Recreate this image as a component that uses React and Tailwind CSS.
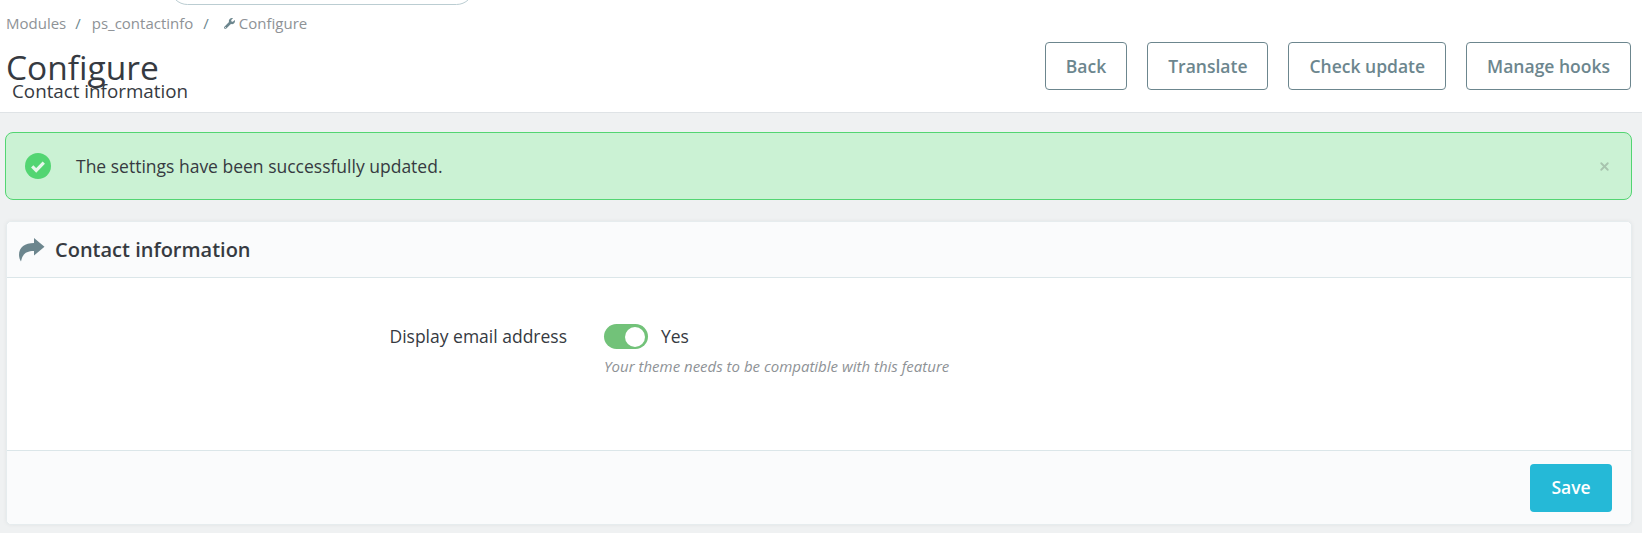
import React from 'react';
import { X } from 'lucide-react';
import { FaWrench } from 'react-icons/fa';

function HeaderButton({ children }) {
  return (
    <button className="h-12 px-[20px] rounded-[4px] border border-[#6c868e] bg-white text-[#6c868e] text-[17.5px] font-semibold">
      {children}
    </button>
  );
}

function SuccessIcon() {
  return (
    <svg viewBox="0 0 26 26" className="w-[26px] h-[26px] shrink-0">
      <circle cx="13" cy="13" r="13" fill="#53d572" />
      <path d="M7.2 13.4l4 4 7.6-7.8" fill="none" stroke="#e6f7ea" strokeWidth="3.2" />
    </svg>
  );
}

function ShareIcon() {
  return (
    <svg viewBox="0 0 26 24" className="w-[26px] h-[24px] shrink-0">
      <path d="M15 0L25.5 8.8L15 17.5V13C7 13 3.5 16 2 23.5C1 22 0 19.5 0 17C0 9 6 5 15 5Z" fill="#6c868e" />
    </svg>
  );
}

export default function App() {
  return (
    <div className="w-[1642px] h-[533px] overflow-hidden bg-[#eff1f2] font-['Open_Sans',sans-serif] text-[#363a41]">
      {/* Header */}
      <div className="relative h-[113px] bg-white border-b border-[#dfe3e6] pl-[6px] pr-[11px]">
        <div className="absolute left-[170px] top-[-30px] w-[304px] h-[35px] rounded-full border border-[#bbcdd2] bg-white"></div>
        <div className="flex items-center h-[17px] translate-y-[15px] text-[15px] text-[#8e9296]">
          <span>Modules</span>
          <span className="ml-[9px] text-[#6c868e]">/</span>
          <span className="ml-[11px]">ps_contactinfo</span>
          <span className="ml-[10px] text-[#6c868e]">/</span>
          <FaWrench className="ml-[15px] w-[11px] h-[11px] text-[#6c868e]" />
          <span className="ml-[4px]">Configure</span>
        </div>
        <div className="flex justify-between items-start mt-[25px]">
          <div>
            <div className="text-[33.5px] leading-[46px] text-[#363a41] mt-[2px]">Configure</div>
            <div className="text-[18.8px] leading-[24px] text-[#363a41] pl-[6px] -mt-[11px]">Contact information</div>
          </div>
          <div className="flex gap-[20px]">
            <HeaderButton>Back</HeaderButton>
            <HeaderButton>Translate</HeaderButton>
            <HeaderButton>Check update</HeaderButton>
            <HeaderButton>Manage hooks</HeaderButton>
          </div>
        </div>
      </div>

      <div className="pl-[5px] pr-[10px] pt-[19px]">
        {/* Alert */}
        <div className="h-[68px] flex items-center rounded-[8px] border border-[#53d572] bg-[#cbf2d4] pl-[19px] pr-[20px]">
          <SuccessIcon />
          <span className="ml-[25px] text-[17.5px]">The settings have been successfully updated.</span>
          <X className="ml-auto w-[13px] h-[13px] text-[#a8c4ae]" strokeWidth={3.5} />
        </div>

        {/* Panel */}
        <div className="mt-[21px] ml-[1px] h-[304px] flex flex-col rounded-[5px] bg-white border border-[#e6ecee] shadow-[0_0_4px_0_rgba(0,0,0,0.06)]">
          <div className="h-[56px] flex items-center bg-[#fafbfc] border-b border-[#dbe6e9] pl-[12px] rounded-t-[5px]">
            <ShareIcon />
            <span className="ml-[10px] text-[20px] font-semibold">Contact information</span>
          </div>
          <div className="flex-1 flex items-start pt-[46px]">
            <div className="w-[560px] text-right text-[17.5px] leading-[24px]">Display email address</div>
            <div className="ml-[37px]">
              <div className="flex items-center h-[25px]">
                <div className="w-[44px] h-[25px] rounded-full bg-[#72c279] flex items-center justify-end pr-[3px]">
                  <div className="w-[20px] h-[20px] rounded-full bg-white"></div>
                </div>
                <span className="ml-[13px] text-[17.5px]">Yes</span>
              </div>
              <div className="mt-[6px] text-[15px] italic text-[#8e9296]">Your theme needs to be compatible with this feature</div>
            </div>
          </div>
          <div className="h-[74px] flex items-center justify-end bg-[#fafbfc] border-t border-[#dbe6e9] pr-[19px] rounded-b-[5px]">
            <button className="w-[82px] h-12 rounded-[4px] bg-[#25b9d7] text-white text-[17.5px] font-semibold">Save</button>
          </div>
        </div>
      </div>
    </div>
  );
}
